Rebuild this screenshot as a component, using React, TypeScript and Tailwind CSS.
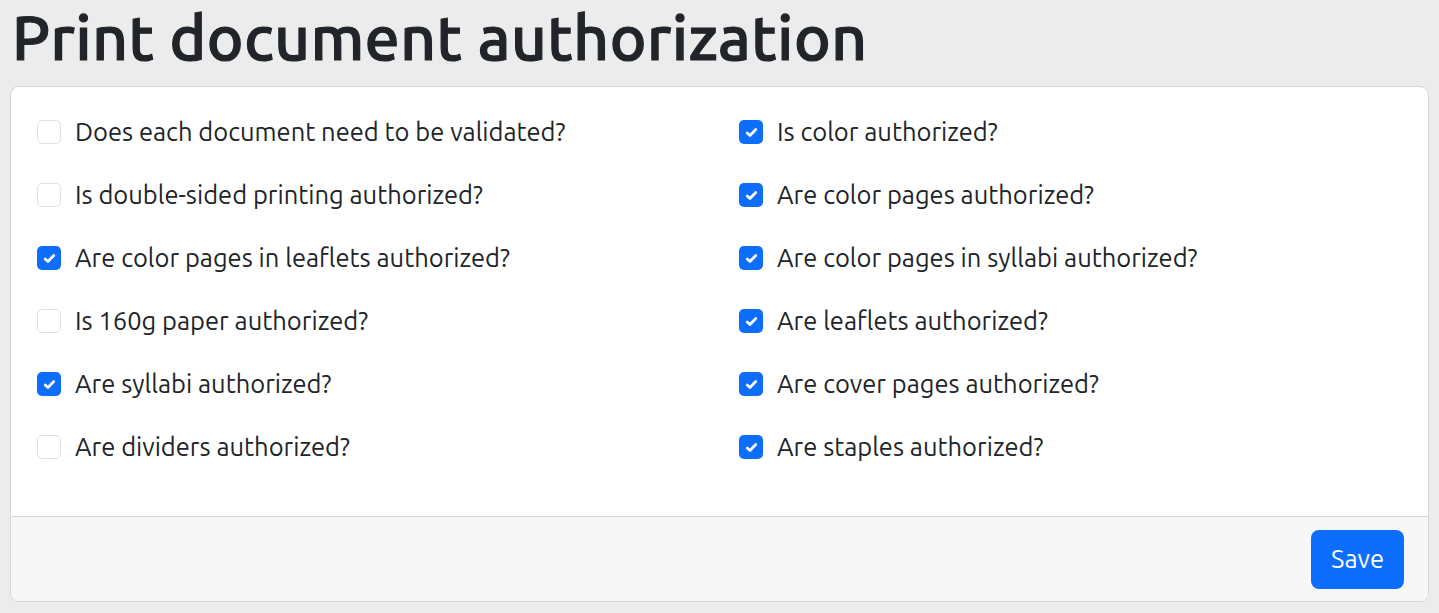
const left: [string, boolean][] = [
  ["Does each document need to be validated?", false],
  ["Is double-sided printing authorized?", false],
  ["Are color pages in leaflets authorized?", true],
  ["Is 160g paper authorized?", false],
  ["Are syllabi authorized?", true],
  ["Are dividers authorized?", false],
];

const right: [string, boolean][] = [
  ["Is color authorized?", true],
  ["Are color pages authorized?", true],
  ["Are color pages in syllabi authorized?", true],
  ["Are leaflets authorized?", true],
  ["Are cover pages authorized?", true],
  ["Are staples authorized?", true],
];

function Check({ label, checked }: { label: string; checked: boolean }) {
  return (
    <label className="flex h-[42px] items-center gap-[14px]">
      {checked ? (
        <span className="flex h-6 w-6 shrink-0 items-center justify-center rounded-[5px] bg-[#0d6efd]">
          <svg viewBox="0 0 20 20" className="h-[17px] w-[17px]" fill="none">
            <path d="M5 10.5l3.2 3L15 6.5" stroke="white" strokeWidth="3.2" strokeLinecap="round" strokeLinejoin="round" />
          </svg>
        </span>
      ) : (
        <span className="h-6 w-6 shrink-0 rounded-[5px] border border-[#dee2e6] bg-white" />
      )}
      <span className="text-[25.5px] leading-none text-[#212529]">{label}</span>
    </label>
  );
}

export default function App() {
  return (
    <div className="min-h-[613px] bg-[#ececec] px-[10px] pb-[10px] font-['Ubuntu','Noto_Sans',sans-serif] text-[#212529]">
      <h1 className="mb-[12px] pl-[2px] text-[62px] font-medium leading-[74px] tracking-[0.6px] [-webkit-text-stroke:1.2px_#212529]">
        Print document authorization
      </h1>
      <div className="overflow-hidden rounded-[9px] border border-[#d5d5d5] bg-white">
        <div className="grid grid-cols-[702px_1fr] pl-[26px] pt-[24px] pb-[48px]">
          <div className="flex flex-col gap-[21px]">
            {left.map(([l, c]) => (
              <Check key={l} label={l} checked={c} />
            ))}
          </div>
          <div className="flex flex-col gap-[21px]">
            {right.map(([l, c]) => (
              <Check key={l} label={l} checked={c} />
            ))}
          </div>
        </div>
        <div className="flex h-[85px] items-center justify-end border-t border-[#d5d5d5] bg-[#f7f7f7] pr-[24px]">
          <button className="h-[59px] w-[93px] rounded-[8px] bg-[#0d6efd] text-[25.5px] text-white">Save</button>
        </div>
      </div>
    </div>
  );
}
